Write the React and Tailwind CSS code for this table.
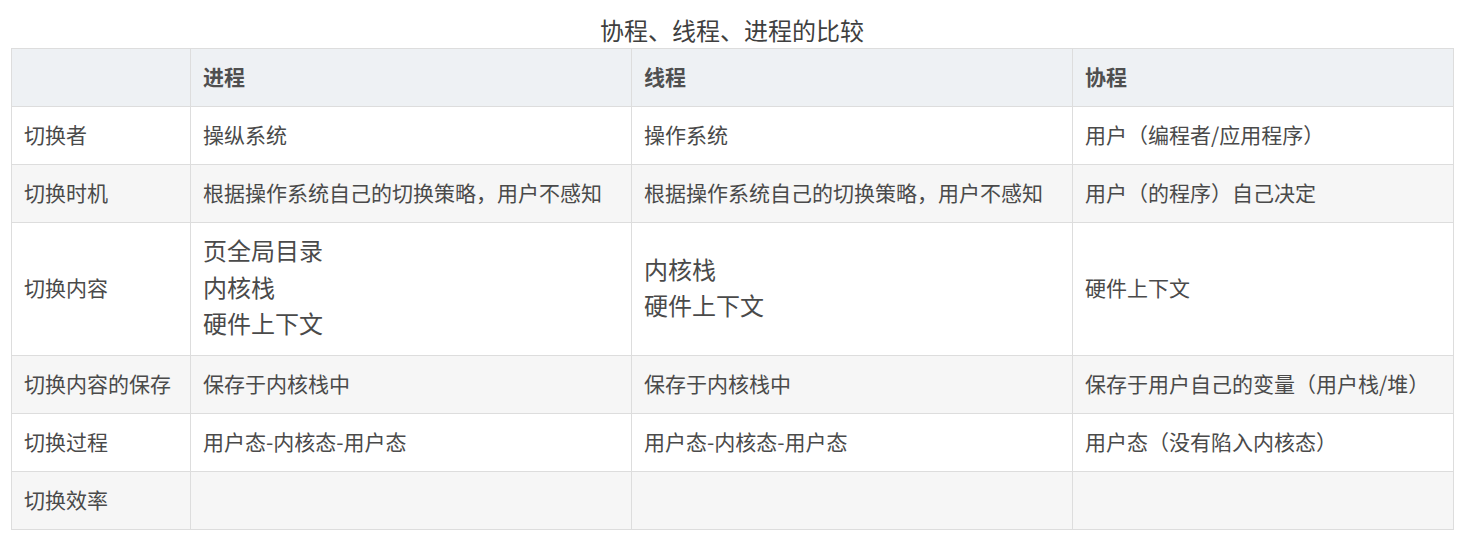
const HEAD = ["", "进程", "线程", "协程"];

const ROWS = [
  ["切换者", "操纵系统", "操作系统", "用户（编程者/应用程序）"],
  ["切换时机", "根据操作系统自己的切换策略，用户不感知", "根据操作系统自己的切换策略，用户不感知", "用户（的程序）自己决定"],
  ["切换内容", ["页全局目录", "内核栈", "硬件上下文"], ["内核栈", "硬件上下文"], "硬件上下文"],
  ["切换内容的保存", "保存于内核栈中", "保存于内核栈中", "保存于用户自己的变量（用户栈/堆）"],
  ["切换过程", "用户态-内核态-用户态", "用户态-内核态-用户态", "用户态（没有陷入内核态）"],
  ["切换效率", "", "", ""],
];

function Cell({ value }) {
  if (Array.isArray(value)) {
    return (
      <td className="border border-[#dddddd] pl-3 pr-3 pb-1 align-middle">
        <div className="text-[24px] leading-[36.5px]">
          {value.map((line) => (
            <div key={line}>{line}</div>
          ))}
        </div>
      </td>
    );
  }
  return <td className="border border-[#dddddd] pl-3 pr-3 pb-1 align-middle">{value}</td>;
}

export default function App() {
  return (
    <div
      className="bg-white w-[1476px] h-[547px] pl-[11px] text-[#4a4a4a]"
      style={{ fontFamily: '"Noto Sans CJK SC", "Noto Sans", sans-serif' }}
    >
      <div className="w-[1442px]">
        <div className="h-[48px] flex items-center justify-center pt-[12px] text-[24px] text-[#3f3f3f]">
          协程、线程、进程的比较
        </div>
        <table className="table-fixed border-collapse w-[1442px] text-[21px] leading-[28px]">
          <colgroup>
            <col className="w-[179px]" />
            <col className="w-[441px]" />
            <col className="w-[441px]" />
            <col className="w-[381px]" />
          </colgroup>
          <thead>
            <tr className="h-[58px] bg-[#eef1f4]">
              {HEAD.map((h, i) => (
                <th key={i} className="border border-[#dddddd] pl-3 pr-3 pb-1 text-left font-bold text-[#4f4f4f]">
                  {h}
                </th>
              ))}
            </tr>
          </thead>
          <tbody>
            {ROWS.map((row, r) => (
              <tr
                key={row[0]}
                className={`${r === 2 ? "h-[133px]" : "h-[58px]"} ${r % 2 === 1 ? "bg-[#f6f6f6]" : "bg-white"}`}
              >
                {row.map((v, c) => (
                  <Cell key={c} value={v} />
                ))}
              </tr>
            ))}
          </tbody>
        </table>
      </div>
    </div>
  );
}
